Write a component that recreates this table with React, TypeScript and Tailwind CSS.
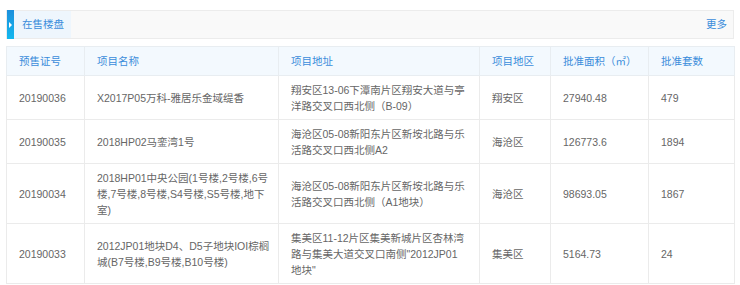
const columns = [
  { title: "预售证号", width: 78 },
  { title: "项目名称", width: 194 },
  { title: "项目地址", width: 201 },
  { title: "项目地区", width: 71 },
  { title: "批准面积（㎡）", width: 98 },
  { title: "批准套数", width: 86 },
];

const rows = [
  {
    id: "20190036",
    name: "X2017P05万科-雅居乐金域缇香",
    address: "翔安区13-06下潭南片区翔安大道与亭洋路交叉口西北侧（B-09）",
    area: "翔安区",
    size: "27940.48",
    units: "479",
  },
  {
    id: "20190035",
    name: "2018HP02马銮湾1号",
    address: "海沧区05-08新阳东片区新垵北路与乐活路交叉口西北侧A2",
    area: "海沧区",
    size: "126773.6",
    units: "1894",
  },
  {
    id: "20190034",
    name: "2018HP01中央公园(1号楼,2号楼,6号楼,7号楼,8号楼,S4号楼,S5号楼,地下室)",
    address: "海沧区05-08新阳东片区新垵北路与乐活路交叉口西北侧（A1地块）",
    area: "海沧区",
    size: "98693.05",
    units: "1867",
  },
  {
    id: "20190033",
    name: "2012JP01地块D4、D5子地块IOI棕榈城(B7号楼,B9号楼,B10号楼)",
    address: "集美区11-12片区集美新城片区杏林湾路与集美大道交叉口南侧\"2012JP01地块\"",
    area: "集美区",
    size: "5164.73",
    units: "24",
  },
];

const App = () => {
  return (
    <div
      className="w-[740px] h-[285px] overflow-hidden bg-white px-[6px] pt-[10px] text-[10.5px]"
      style={{ fontFamily: '"Liberation Sans", "Noto Sans CJK SC", sans-serif' }}
    >
      {/* Section header */}
      <div className="flex h-[29px] items-stretch border border-[#ececec] bg-[#f9f9f9]">
        <div className="relative w-[7px] -my-px bg-gradient-to-b from-[#1c8fdc] to-[#12b8ef]">
          <span className="absolute left-[2px] top-[12px] h-0 w-0 border-y-[3px] border-l-[3px] border-y-transparent border-l-white" />
        </div>
        <div className="flex w-[57px] items-center bg-[#eef6fd] pl-[8px] text-[#3b8ddb]">
          在售楼盘
        </div>
        <div className="flex-1" />
        <div className="flex items-center pr-[6px] text-[#3b8ddb]">更多</div>
      </div>

      {/* Table */}
      <table className="mt-[7px] w-[728px] table-fixed border-collapse leading-[16px]">
        <colgroup>
          {columns.map((c) => (
            <col key={c.title} style={{ width: c.width }} />
          ))}
        </colgroup>
        <thead>
          <tr className="bg-[#f3f9fe]">
            {columns.map((c) => (
              <th
                key={c.title}
                className="border border-[#e8edf1] pt-[6px] pb-[6px] pl-3 text-left font-normal text-[#3b8ddb]"
              >
                {c.title}
              </th>
            ))}
          </tr>
        </thead>
        <tbody className="text-[#666]">
          {rows.map((r) => (
            <tr key={r.id}>
              <td className="border border-[#ebebeb] pt-[6px] pb-[5px] pl-3">{r.id}</td>
              <td className="border border-[#ebebeb] pt-[6px] pb-[5px] pl-3 pr-[6px]">{r.name}</td>
              <td className="border border-[#ebebeb] pt-[6px] pb-[5px] pl-3 pr-[13px]">{r.address}</td>
              <td className="border border-[#ebebeb] pt-[6px] pb-[5px] pl-3">{r.area}</td>
              <td className="border border-[#ebebeb] pt-[6px] pb-[5px] pl-3">{r.size}</td>
              <td className="border border-[#ebebeb] pt-[6px] pb-[5px] pl-3">{r.units}</td>
            </tr>
          ))}
        </tbody>
      </table>
    </div>
  );
};

export default App;
